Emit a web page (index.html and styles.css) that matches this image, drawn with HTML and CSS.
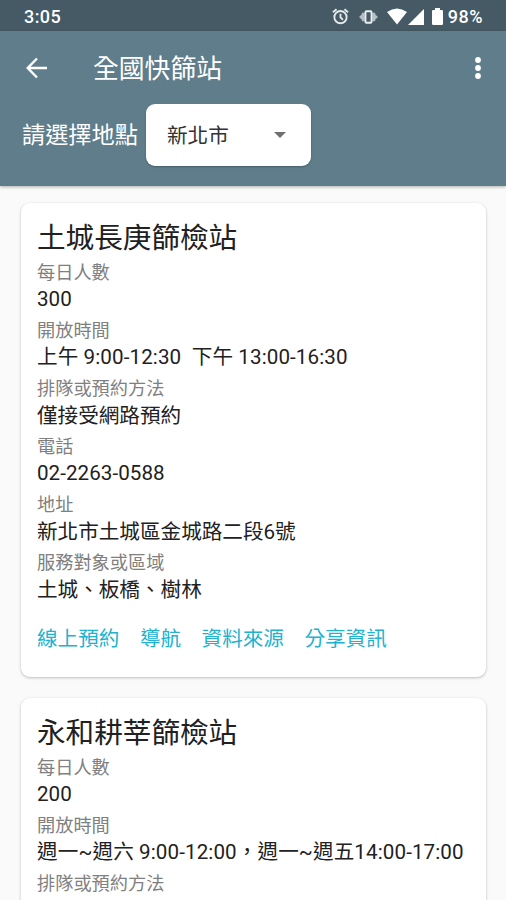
FILE: index.html
```html
<!DOCTYPE html>
<html lang="zh-Hant">
<head>
<meta charset="utf-8">
<title>全國快篩站</title>
<link rel="stylesheet" href="styles.css">
</head>
<body>
<div class="screen">
  <div class="status">
    <span class="clock">3:05</span>
    <div class="status-icons">
      <svg class="alarm" viewBox="0 0 18 18" fill="none" stroke="#e3e9ec" stroke-width="2"><circle cx="9" cy="9.7" r="6.5"/><path d="M9 6v4l2.6 2.4M1 4.5 4.8 1.3M17 4.5 13.2 1.3"/></svg>
      <svg class="vibrate" viewBox="0 0 20 14"><path d="M0 7 3 4v6zM20 7l-3-3v6zM3 2.5h3v9H3zM14 2.5h3v9h-3z" fill="#b4c0c6"/><rect x="6.8" y="1" width="6.4" height="12" rx="1" fill="none" stroke="#e9eef0" stroke-width="2"/></svg>
      <svg class="wifi" viewBox="0 0 20 17"><path d="M0 4Q10-3.2 20 4L10 16.5z" fill="#fff"/></svg>
      <svg class="signal" viewBox="0 0 16 16"><path d="M16 0v16H0z" fill="#fff"/></svg>
      <svg class="battery" viewBox="0 0 11 17"><path d="M3 0h5v2h1.7Q11 2 11 3.3v12.4Q11 17 9.7 17H1.3Q0 17 0 15.7V3.3Q0 2 1.3 2H3z" fill="#fff"/></svg>
    </div>
    <span class="percent">98%</span>
  </div>
  <header class="header">
    <div class="bar">
      <svg class="back" viewBox="0 0 22 22" fill="none" stroke="#fff" stroke-width="2.4"><path d="M21 11H2M11 1.5 1.7 11l9.3 9.5"/></svg>
      <h1>全國快篩站</h1>
      <svg class="more" viewBox="0 0 6 22" fill="#fff"><circle cx="3" cy="3" r="2.9"/><circle cx="3" cy="11" r="2.9"/><circle cx="3" cy="19" r="2.9"/></svg>
    </div>
    <div class="picker">
      <span class="picker-label">請選擇地點</span>
      <div class="select"><span>新北市</span><svg viewBox="0 0 12 6"><path d="M0 0h12L6 6z" fill="#707070"/></svg></div>
    </div>
  </header>
  <main class="list">
    <article class="card">
      <h2>土城長庚篩檢站</h2>
      <dl>
        <dt>每日人數</dt><dd class="number">300</dd>
        <dt>開放時間</dt><dd class="hours">上午 9:00-12:30&nbsp; 下午 13:00-16:30</dd>
        <dt>排隊或預約方法</dt><dd>僅接受網路預約</dd>
        <dt>電話</dt><dd class="number">02-2263-0588</dd>
        <dt>地址</dt><dd>新北市土城區金城路二段6號</dd>
        <dt>服務對象或區域</dt><dd>土城、板橋、樹林</dd>
      </dl>
      <div class="actions"><a>線上預約</a><a>導航</a><a>資料來源</a><a>分享資訊</a></div>
    </article>
    <article class="card">
      <h2>永和耕莘篩檢站</h2>
      <dl>
        <dt>每日人數</dt><dd class="number">200</dd>
        <dt>開放時間</dt><dd class="hours">週一~週六 9:00-12:00，週一~週五14:00-17:00</dd>
        <dt>排隊或預約方法</dt><dd>可現場排隊、網路預約或電話預約</dd>
      </dl>
    </article>
  </main>
</div>
</body>
</html>
```
FILE: styles.css
```css
* { box-sizing: border-box; margin: 0; padding: 0; }
body { font-family: Roboto, "Noto Sans CJK TC", sans-serif; background: #fafafa; }
.screen { width: 506px; height: 900px; overflow: hidden; display: flex; flex-direction: column; }
.status { flex: none; height: 31px; background: #455a64; display: flex; align-items: center; padding: 2px 22px 0 24px; color: #fff; font-size: 18px; font-weight: 500; }
.clock { flex: 1; letter-spacing: .4px; }
.percent { letter-spacing: .5px; }
.status-icons { display: flex; align-items: center; }
.status-icons svg { display: block; }
.alarm { width: 17px; height: 17px; margin-right: 10px; }
.vibrate { width: 19px; height: 14px; margin-right: 9px; }
.wifi { width: 20px; height: 17px; margin-right: 1px; }
.signal { width: 16px; height: 16px; margin-right: 8px; }
.battery { width: 11px; height: 17px; margin-right: 6px; }
.percent { margin-left: -1px; margin-right: 1px; }
.header { flex: none; height: 155px; background: #607d8b; color: #fff; box-shadow: 0 1px 3px rgba(0,0,0,.3); }
.bar { height: 73px; display: flex; align-items: center; padding: 0 25px 0 26px; }
.back { width: 22px; height: 22px; margin-right: 45px; }
.bar h1 { flex: 1; font-size: 25.8px; font-weight: 400; line-height: 38px; padding-top: 2px; }
.more { width: 6px; height: 22px; }
.picker { display: flex; align-items: center; padding-left: 22px; }
.picker-label { width: 124px; font-size: 23.2px; line-height: 34px; white-space: nowrap; }
.select { width: 165px; height: 62px; background: #fff; border-radius: 9px; color: #333; font-size: 20.6px; display: flex; align-items: center; justify-content: space-between; padding: 0 25px 2px 21px; box-shadow: 0 1px 2px rgba(0,0,0,.25); }
.select svg { width: 12px; height: 6px; margin-top: 2px; }
.list { flex: none; padding: 17px 20px 0 21px; }
.card { height: 474px; margin-bottom: 21px; padding: 13px 16px 0; background: #fff; border-radius: 9px; box-shadow: 0 1px 3px rgba(0,0,0,.25); color: #212121; }
.card h2 { font-size: 28.6px; font-weight: 400; line-height: 44px; white-space: nowrap; }
.card dt { height: 26px; line-height: 26px; font-size: 18.2px; color: #808080; }
.card dd { height: 32px; line-height: 28px; font-size: 20.6px; white-space: nowrap; }
.card .number { line-height: 27px; letter-spacing: .05px; }
.card .hours { line-height: 27px; letter-spacing: .1px; }
.actions { display: flex; gap: 20.5px; margin-top: 16px; font-size: 20.6px; line-height: 31px; color: #22b2cf; }
```
